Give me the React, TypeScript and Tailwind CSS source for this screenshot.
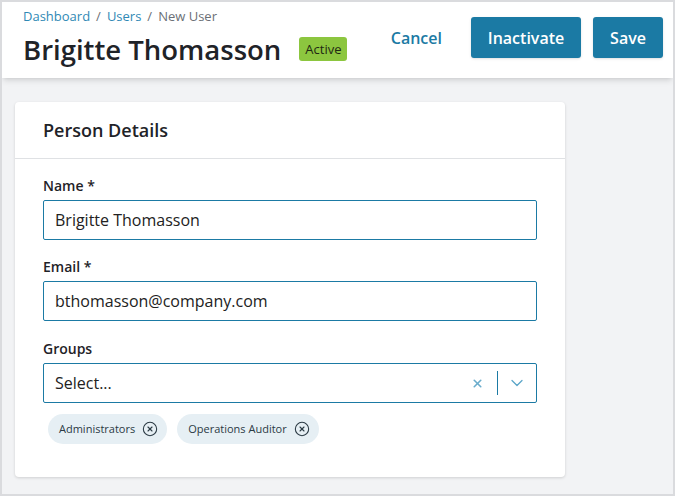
import { ChevronDown, X, CircleX } from "lucide-react";

const font = { fontFamily: '"Open Sans", "Liberation Sans", sans-serif' };

const Field = ({ label, value }: { label: string; value: string }) => (
  <div className="flex flex-col">
    <label className="text-[14px] leading-[20px] font-semibold text-[#1f2328] mb-[4px]">{label}</label>
    <div className="h-[40px] border border-[#1b7aa4] rounded-[2px] flex items-center px-[11px] text-[16px] text-[#222]">
      {value}
    </div>
  </div>
);

const Chip = ({ label }: { label: string }) => (
  <div className="h-[30px] rounded-full bg-[#e6eff4] flex items-center pl-[11px] pr-[9px] gap-[7px] text-[11px] text-[#2b3a44]">
    <span>{label}</span>
    <CircleX size={16} strokeWidth={1.6} className="text-[#2b3a44]" />
  </div>
);

export default function App() {
  return (
    <div style={font} className="w-[675px] h-[496px] border-2 border-[#dadbde] bg-[#f2f3f5] flex flex-col overflow-hidden">
      {/* Header */}
      <header className="bg-white shadow-md relative z-10 flex justify-between pl-[21px] pr-[10px] pt-[5px] pb-[9px]">
        <div className="flex flex-col">
          <nav className="text-[13px] leading-[18px] flex gap-[6px]">
            <span className="text-[#2f89b5]">Dashboard</span>
            <span className="text-[#6b7076]">/</span>
            <span className="text-[#2f89b5]">Users</span>
            <span className="text-[#6b7076]">/</span>
            <span className="text-[#6b7076]">New User</span>
          </nav>
          <div className="flex items-center mt-[6px]">
            <h1 className="text-[27.5px] leading-[38px] font-semibold text-[#1f2328]">Brigitte Thomasson</h1>
            <span className="ml-[18px] -mt-[3px] h-[24px] px-[6px] rounded-[3px] bg-[#8cc63f] text-[13px] leading-[24px] text-[#1f2a13]">Active</span>
          </div>
        </div>
        <div className="flex items-start mt-[10px]">
          <button className="h-[41px] px-[8px] mr-[21px] text-[16px] font-semibold text-[#1b7aa4]">Cancel</button>
          <button className="h-[41px] w-[110px] rounded-[3px] bg-[#1b7aa4] text-white text-[16px] font-semibold shadow-sm">Inactivate</button>
          <button className="h-[41px] w-[70px] ml-[12px] rounded-[3px] bg-[#1b7aa4] text-white text-[16px] font-semibold shadow-sm">Save</button>
        </div>
      </header>

      {/* Body */}
      <main className="pl-[13px] pt-[24px]">
        <section className="w-[550px] bg-white rounded-[4px] shadow-[0_1px_3px_rgba(0,0,0,0.15)]">
          <div className="px-[28px] py-[16px] border-b border-[#dfe1e4]">
            <h2 className="text-[18px] leading-[24px] font-semibold text-[#1f2328]">Person Details</h2>
          </div>
          <div className="px-[28px] pt-[17px] pb-[33px] flex flex-col gap-[17px]">
            <Field label="Name *" value="Brigitte Thomasson" />
            <Field label="Email *" value="bthomasson@company.com" />
            <div className="flex flex-col mt-[1px]">
              <label className="text-[14px] leading-[20px] font-semibold text-[#1f2328] mb-[4px]">Groups</label>
              <div className="h-[40px] border border-[#1b7aa4] rounded-[2px] flex items-center pl-[11px] text-[16px] text-[#222]">
                <span className="flex-1">Select...</span>
                <X size={13} strokeWidth={3} className="text-[#6aaccc] mr-[13px]" />
                <div className="w-px h-[24px] bg-[#1b7aa4]" />
                <ChevronDown size={20} strokeWidth={1.5} className="text-[#5aa5c8] mx-[9px]" />
              </div>
              <div className="flex gap-[10px] mt-[11px] pl-[5px]">
                <Chip label="Administrators" />
                <Chip label="Operations Auditor" />
              </div>
            </div>
          </div>
        </section>
      </main>
    </div>
  );
}
